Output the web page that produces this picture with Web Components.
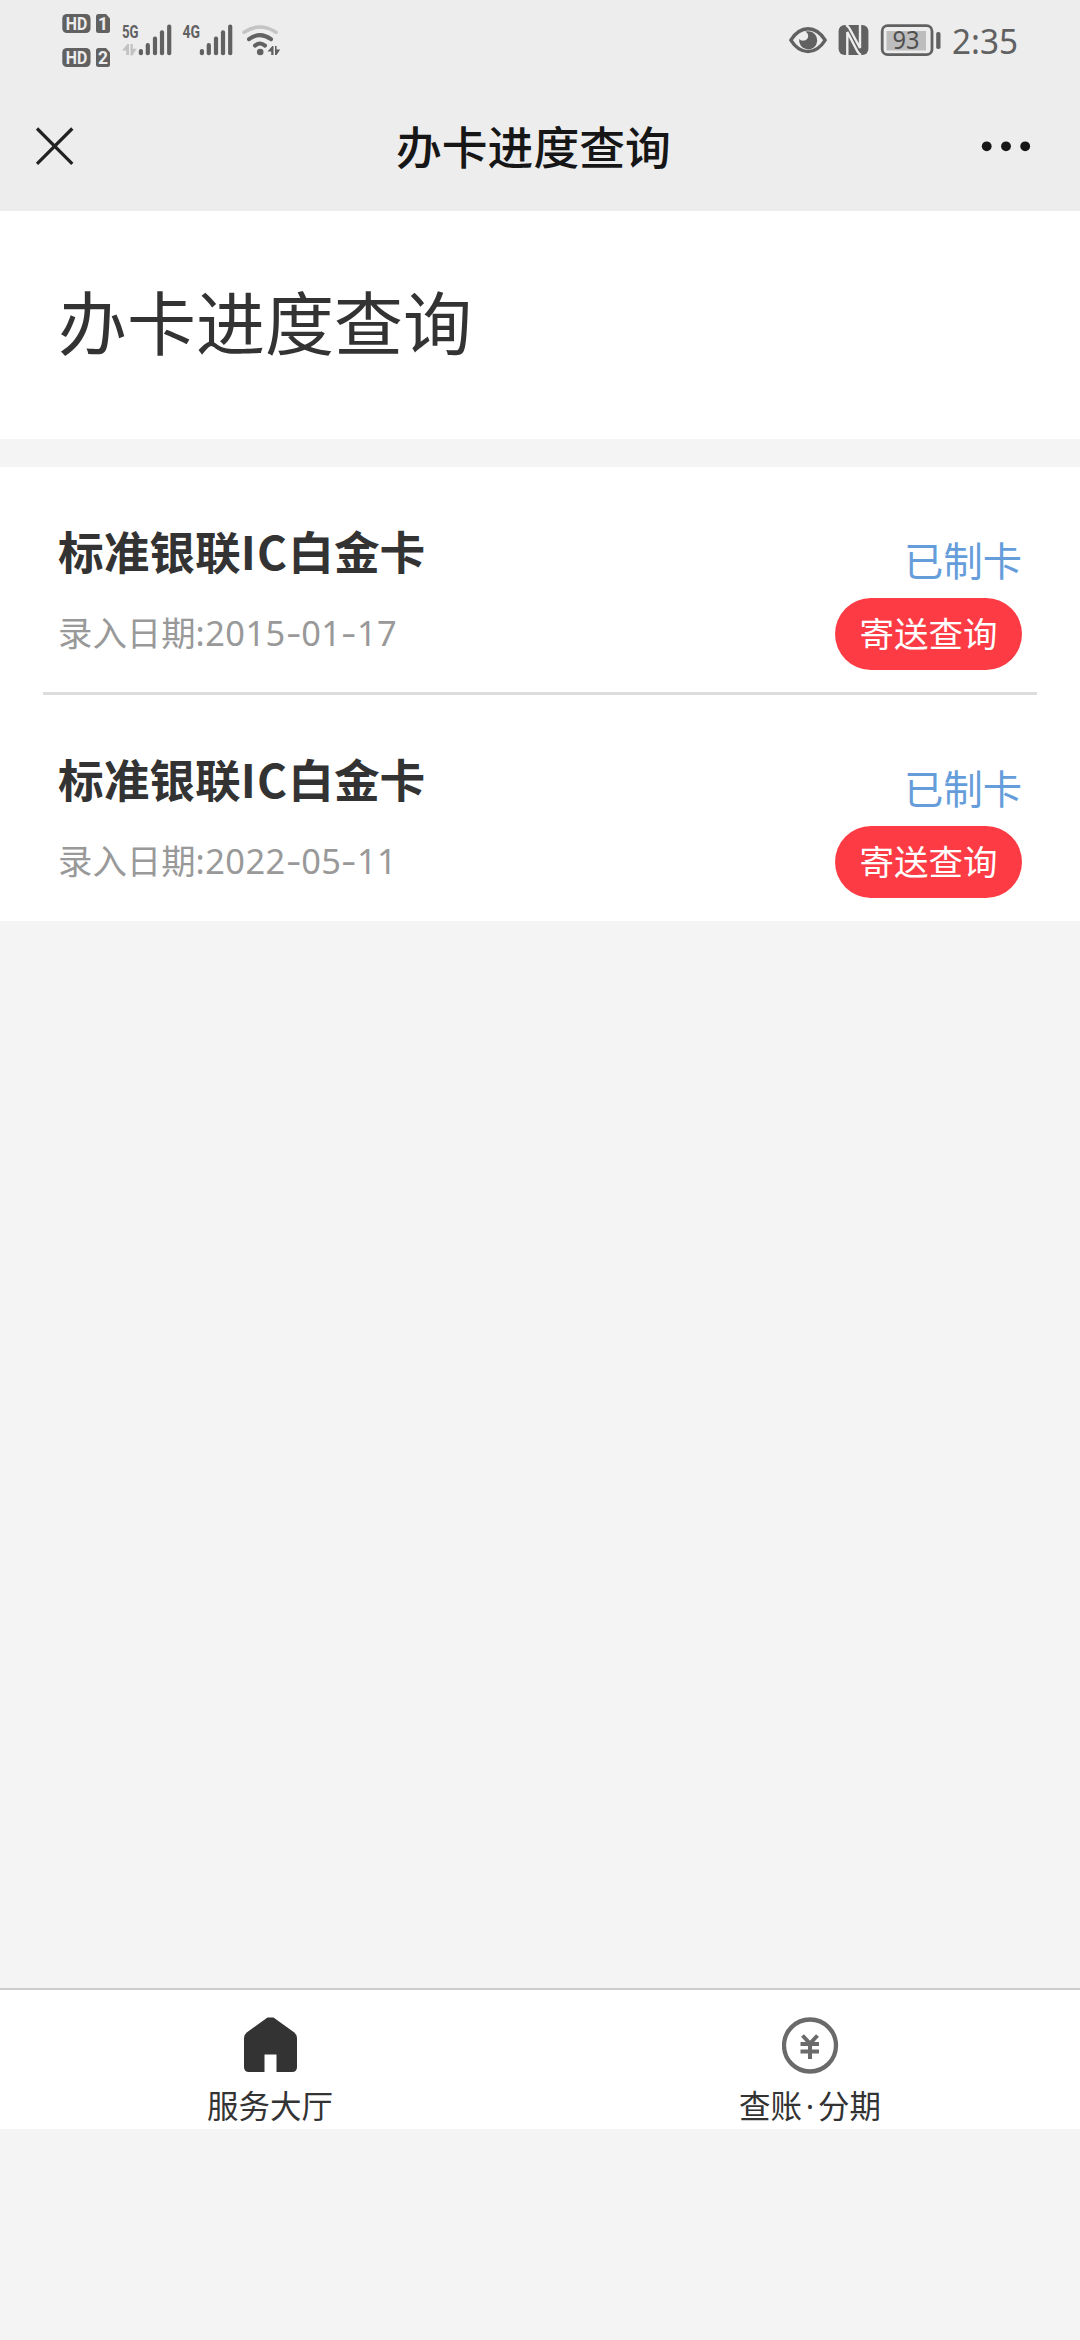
<!DOCTYPE html>
<html lang="zh-CN">
<head>
<meta charset="utf-8">
<title>办卡进度查询</title>
<style>
html,body{margin:0;padding:0}
body{width:1080px;height:2340px;overflow:hidden;background:#f4f4f4;font-family:"Noto Sans CJK SC",sans-serif;color:#333}
</style>
</head>
<body>
<app-screen>
  <status-bar slot="top"></status-bar>
  <nav-bar slot="top">办卡进度查询</nav-bar>
  <page-heading>办卡进度查询</page-heading>
  <card-list>
    <card-item name="标准银联IC白金卡" date="2015-01-17" status="已制卡"></card-item>
    <card-item name="标准银联IC白金卡" date="2022-05-11" status="已制卡"></card-item>
  </card-list>
  <tab-bar slot="bottom">
    <tab-item icon="home">服务大厅</tab-item>
    <tab-item icon="yuan">查账<span style="font-family:'Noto Sans';display:inline-block;width:16px;text-align:center">·</span>分期</tab-item>
  </tab-bar>
</app-screen>
<script>
function define(name, html){
  customElements.define(name, class extends HTMLElement{
    constructor(){
      super();
      this.attachShadow({mode:'open'}).innerHTML = html;
    }
  });
}

define('app-screen', `
<style>
:host{display:flex;flex-direction:column;width:1080px;height:2340px;background:#f4f4f4}
main{flex:1;display:flex;flex-direction:column}
footer{padding-bottom:211px}
</style>
<header><slot name="top"></slot></header>
<main><slot></slot></main>
<footer><slot name="bottom"></slot></footer>`);

const bars = (xs) => xs.map((x,i)=>{
  const top=[49,43,36.6,30.3,24.6][i];
  return `<rect x="${x-2.1}" y="${top}" width="4.2" height="${55.2-top}" rx="2"/>`;
}).join('');

define('status-bar', `
<style>
:host{display:block;height:80px;background:#ededed}
svg{display:block}
text{font-family:"Noto Sans",sans-serif}
.n{font-family:"Roboto",sans-serif;font-weight:700}
</style>
<svg width="1080" height="80" viewBox="0 0 1080 80" fill="#616161">
  <rect x="62.3" y="14" width="28.2" height="19" rx="4.5"/>
  <path d="M98.5 14H106l4 4.5V30.5a2.5 2.5 0 0 1-2.5 2.5h-9A2.5 2.5 0 0 1 96 30.5v-14A2.5 2.5 0 0 1 98.5 14z"/>
  <rect x="62.3" y="48" width="28.2" height="19" rx="4.5"/>
  <path d="M98.5 48H106l4 4.5V64.5a2.5 2.5 0 0 1-2.5 2.5h-9A2.5 2.5 0 0 1 96 64.5v-14A2.5 2.5 0 0 1 98.5 48z"/>
  <g fill="#ededed" font-size="17.5" text-anchor="middle">
    <text class="n" x="76.5" y="29.8" textLength="21.5" lengthAdjust="spacingAndGlyphs">HD</text>
    <text class="n" x="103" y="29.8">1</text>
    <text class="n" x="76.5" y="63.8" textLength="21.5" lengthAdjust="spacingAndGlyphs">HD</text>
    <text class="n" x="103" y="63.8">2</text>
  </g>
  <text class="n" x="122" y="38" font-size="18" textLength="16.5" lengthAdjust="spacingAndGlyphs">5G</text>
  <text class="n" x="182.5" y="38" font-size="18" textLength="17.5" lengthAdjust="spacingAndGlyphs">4G</text>
  <path fill="#c2c2c2" d="M122 50.5L127.5 44h1.5v11h-2.8v-4.5zM130.5 44h2.3v4.8h4L132.3 55.5h-1.8z"/>
  ${bars([140.9,147.8,155,162,169.2])}
  ${bars([201.9,208.8,216,223,230.2])}
  <g fill="none" stroke-linecap="round" stroke-width="3.6">
    <path stroke="#c4c4c4" d="M244 32.3Q260 21.7 276 32.3"/>
    <path stroke="#616161" stroke-width="4" d="M249 39.2Q260 31 271 39.2"/>
    <path stroke="#616161" stroke-width="4" d="M255 45.6Q260 41.5 265 45.6"/>
  </g>
  <circle cx="260.2" cy="52" r="3.3"/>
  <path d="M267.5 51.5L272.3 46h1.2v9h-2.3v-3.5zM275 46h1.6v3.5h3.6L276.6 55H275z"/>

  <path fill="none" stroke="#616161" stroke-width="3.4" stroke-linejoin="round" d="M790.8 40.2Q798 28.8 808 28.8T825.2 40.2Q818 51.6 808 51.6T790.8 40.2z"/>
  <path d="M808.5 31.2a9.1 9.1 0 1 1-9.3 7.5c1 1.6 2.6 2.1 4.4 1.9c3.6-.4 5.2-3.2 4.3-6.2c-.4-1.3-1.3-2.2-2.5-2.7c1-.4 2-.5 3.1-.5z"/>
  <rect x="838.6" y="25" width="29.8" height="30" rx="6"/>
  <path fill="none" stroke="#ededed" stroke-width="2.4" stroke-linejoin="bevel" d="M847.3 55V32L857.5 51.5Q858.5 53.5 861 55M846 25Q848 26 849.5 28.5L860 48V25"/>
  <rect x="882.2" y="25.7" width="49.8" height="29" rx="5.5" fill="none" stroke="#616161" stroke-width="2.8"/>
  <rect x="886.5" y="31" width="39.5" height="19.5" fill="#bdbdbd"/>
  <text x="906" y="49.3" font-size="25.5" text-anchor="middle" fill="#505050" textLength="27" lengthAdjust="spacingAndGlyphs">93</text>
  <rect x="936.2" y="32" width="4.3" height="17" rx="1.8"/>
  <text x="952" y="53.6" font-size="34.5" textLength="66" lengthAdjust="spacingAndGlyphs">2:35</text>
</svg>`);

define('nav-bar', `
<style>
:host{display:grid;grid-template-columns:396px 1fr 410px;align-items:center;height:131px;background:#ededed;color:#161616;font-weight:500;font-size:45.8px;line-height:130px;white-space:nowrap}
svg{display:block}
div{height:131px}
</style>
<svg width="110" height="131" viewBox="0 0 110 131" fill="none" stroke="#222" stroke-width="3.2"><path d="M37 48.5L72.3 83.8M72.3 48.5L37 83.8"/></svg>
<div><slot></slot></div>
<svg width="410" height="131" viewBox="0 0 410 131" fill="#161616"><circle cx="315.7" cy="66.3" r="4.9"/><circle cx="335" cy="66.3" r="4.9"/><circle cx="354.2" cy="66.3" r="4.9"/></svg>`);

define('page-heading', `
<style>
:host{display:block;box-sizing:border-box;height:228px;padding:59px 0 0 58px;margin-bottom:28px;background:#fff;font-size:69px;line-height:100px}
</style><slot></slot>`);

define('card-list', `<style>:host{display:flex;flex-direction:column;background:#fff;height:454px}</style><slot></slot>`);

customElements.define('card-item', class extends HTMLElement{
  connectedCallback(){
    const a = n => this.getAttribute(n);
    const date = a('date').replace(/-/g, '<i>-</i>');
    const name = a('name').replace('IC', '<b>IC</b>');
    this.attachShadow({mode:'open'}).innerHTML = `
<style>
:host{display:flex;justify-content:space-between;box-sizing:border-box;height:228px;margin:0 43px;padding:0 15px;border-bottom:3px solid #ddd}
:host(:last-child){border-bottom:0;height:226px}
.info{display:flex;flex-direction:column;gap:27px;padding-top:53px}
h2{margin:0;font-size:45.7px;line-height:60px;font-weight:700;white-space:nowrap}
h2 b{font-weight:700;letter-spacing:1.2px}
p{margin:0;font-size:34.4px;line-height:48px;color:#999;white-space:nowrap}
p span{font-family:"Noto Sans",sans-serif;letter-spacing:.45px}
p i{display:inline-block;width:15.5px;font-style:normal;letter-spacing:0;text-align:center;transform:translateY(-1px) scaleX(1.35)}
.side{display:flex;flex-direction:column;align-items:flex-end;padding-top:67px}
.status{font-size:39.3px;line-height:50px;color:#659dda;margin-bottom:14px}
button{border:0;margin:0;padding:0 0 4px;width:187px;height:72px;border-radius:36px;background:#fd3b44;color:#fff;font:400 34.5px/68px "Noto Sans CJK SC",sans-serif}
</style>
<div class="info"><h2>${name}</h2><p>录入日期<span>:${date}</span></p></div>
<div class="side"><div class="status">${a('status')}</div><button>寄送查询</button></div>`;
  }
});

define('tab-bar', `
<style>:host{display:flex;box-sizing:border-box;height:141px;border-top:2px solid #ccc;background:#fff}</style><slot></slot>`);

const icons = {
  home:`<path fill="#333" d="M25.5 .5H31.5L52 15.2Q55 17.5 55 21V50Q55 55 50 55H34.5V37.5H22.5V55H7Q2 55 2 50V21Q2 17.5 5 15.2z"/>`,
  yuan:`<g fill="none" stroke="#6a6a6a"><circle cx="28" cy="28.5" r="26" stroke-width="4.3"/><path stroke-width="4" d="M20.5 18.5L28 26.5L35.5 18.5M18.5 27H37M18.5 34.5H37M28 26V42"/></g>`
};
customElements.define('tab-item', class extends HTMLElement{
  connectedCallback(){
    this.attachShadow({mode:'open'}).innerHTML = `
<style>
:host{flex:1;display:flex;flex-direction:column;align-items:center;padding-top:27px;font-size:31.5px;line-height:46px;white-space:nowrap}
svg{display:block;margin-bottom:7px}
</style>
<svg width="57" height="57" viewBox="0 0 57 57">${icons[this.getAttribute('icon')]}</svg>
<div><slot></slot></div>`;
  }
});
</script>
</body>
</html>
